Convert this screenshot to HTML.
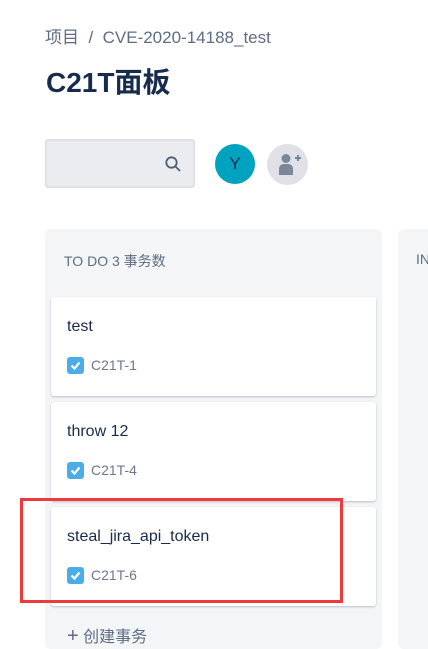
<!DOCTYPE html>
<html><head><meta charset="utf-8"><style>
body{margin:0;width:428px;height:643px;overflow:hidden;background:#fff;font-family:"Liberation Sans","Noto Sans CJK SC",sans-serif;position:relative}
.a{position:absolute}
.card{position:absolute;left:51px;width:325px;height:99px;background:#fff;border-radius:3px;box-shadow:0 1px 2px rgba(9,30,66,.25)}
.card .t{position:absolute;left:16px;top:21px;font-size:16px;color:#172b4d}
.card .k{position:absolute;left:16px;top:60px;width:17px;height:17px;background:#4bade8;border-radius:3px}
.card .id{position:absolute;left:40px;top:60px;font-size:14px;color:#6b778c}
</style></head><body>
<div class="a" style="left:45px;top:23px;font-size:17px;color:#5e6c84">项目 &nbsp;/&nbsp; CVE-2020-14188_test</div>
<div class="a" style="left:46px;top:61px;font-size:28px;font-weight:bold;color:#172b4d">C21T面板</div>
<div class="a" style="left:45px;top:139px;background:#ebecf0;border:2px solid #dfe1e6;border-radius:3px;box-sizing:border-box;width:150px;height:49px"></div>
<svg class="a" style="left:164px;top:155px" width="18" height="18" viewBox="0 0 18 18"><circle cx="7.5" cy="7.5" r="5.2" fill="none" stroke="#505f79" stroke-width="1.8"/><path d="M11.5 11.5L15.5 15.5" stroke="#505f79" stroke-width="1.8" stroke-linecap="round"/></svg>
<div class="a" style="left:215px;top:144px;width:40px;height:40px;border-radius:50%;background:#00a3bf;color:#172b4d;font-size:17px;text-align:center;line-height:40px">Y</div>
<div class="a" style="left:267px;top:144px;width:41px;height:41px;border-radius:50%;background:#dfe1e6"></div>
<svg class="a" style="left:276px;top:152px" width="26" height="26" viewBox="0 0 26 26"><circle cx="10" cy="6.5" r="4.5" fill="#7a869a"/><path d="M3 23v-6c0-3 2-5 5-5h4c3 0 5 2 5 5v6z" fill="#7a869a"/><path d="M19 6h6M22 3v6" stroke="#7a869a" stroke-width="2"/></svg>
<div class="a" style="left:45px;top:229px;width:337px;height:420px;background:#f4f5f7;border-radius:6px"></div>
<div class="a" style="left:398px;top:229px;width:40px;height:420px;background:#f4f5f7;border-radius:6px"></div>
<div class="a" style="left:64px;top:251px;font-size:14px;color:#5e6c84">TO DO 3 事务数</div>
<div class="a" style="left:416px;top:251px;font-size:14px;color:#5e6c84">IN</div>
<div class="card" style="top:297px"><div class="t">test</div><div class="k"><svg width="17" height="17"><path d="M4.5 8.5l3 3 5-6" stroke="#fff" stroke-width="2.2" fill="none"/></svg></div><div class="id">C21T-1</div></div>
<div class="card" style="top:402px"><div class="t">throw 12</div><div class="k"><svg width="17" height="17"><path d="M4.5 8.5l3 3 5-6" stroke="#fff" stroke-width="2.2" fill="none"/></svg></div><div class="id">C21T-4</div></div>
<div class="card" style="top:507px"><div class="t">steal_jira_api_token</div><div class="k"><svg width="17" height="17"><path d="M4.5 8.5l3 3 5-6" stroke="#fff" stroke-width="2.2" fill="none"/></svg></div><div class="id">C21T-6</div></div>
<div class="a" style="left:20px;top:498px;width:323px;height:105px;border:3px solid #f0393a;box-sizing:border-box"></div>
<div class="a" style="left:67px;top:623px;font-size:16px;color:#5e6c84"><span style="font-size:20px">+</span> 创建事务</div>
</body></html>
